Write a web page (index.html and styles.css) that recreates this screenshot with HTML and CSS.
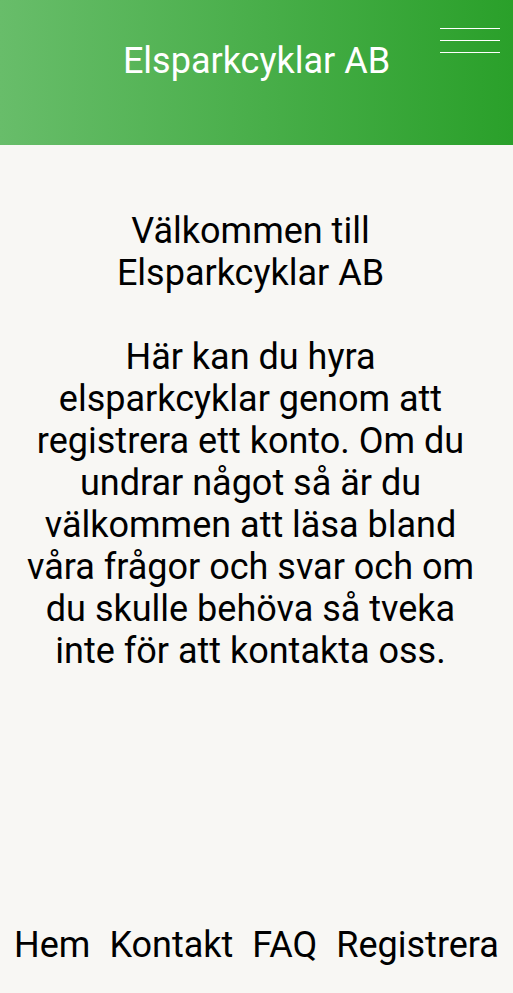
FILE: index.html
```html
<!DOCTYPE html>
<html lang="sv">
<head>
<meta charset="utf-8">
<title>Elsparkcyklar AB</title>
<link rel="stylesheet" href="styles.css">
</head>
<body>
<header class="top">
  <h1 class="brand">Elsparkcyklar AB</h1>
  <button class="menu" aria-label="Meny">
    <span class="bar"></span>
    <span class="bar"></span>
    <span class="bar"></span>
  </button>
</header>
<main class="content">
  <p class="intro">Välkommen till<br>Elsparkcyklar AB</p>
  <p class="intro">Här kan du hyra elsparkcyklar genom att registrera ett konto. Om du undrar något så är du välkommen att läsa bland våra frågor och svar och om du skulle behöva så tveka inte för att kontakta oss.</p>
</main>
<nav class="foot">
  <a href="#">Hem</a>
  <a href="#">Kontakt</a>
  <a href="#">FAQ</a>
  <a href="#">Registrera</a>
</nav>
</body>
</html>
```
FILE: styles.css
```css
* { box-sizing: border-box; }
html, body { margin: 0; padding: 0; }
body {
  font-family: Roboto, "Liberation Sans", sans-serif;
  background: #f8f7f4;
  color: #000;
  min-height: 993px;
  display: flex;
  flex-direction: column;
}
.top {
  position: relative;
  height: 145px;
  background: linear-gradient(90deg, #68bd6a 0%, #2aa02a 100%);
  display: flex;
  justify-content: center;
  padding-top: 40px;
}
.brand {
  margin: 0;
  font-weight: 400;
  font-size: 36px;
  line-height: normal;
  color: #fff;
  align-self: flex-start;
}
.menu {
  position: absolute;
  top: 28px;
  right: 13px;
  width: 60px;
  padding: 0;
  border: 0;
  background: none;
  display: flex;
  flex-direction: column;
  gap: 11px;
}
.bar {
  display: block;
  height: 1px;
  background: #fff;
}
.content {
  flex: 1;
  padding: 65px 30px 0 18px;
  text-align: center;
}
.intro {
  margin: 0 0 42px;
  font-size: 36px;
  line-height: normal;
}
.foot {
  display: flex;
  justify-content: center;
  gap: 19px;
  padding-bottom: 27px;
}
.foot a {
  color: #000;
  text-decoration: none;
  font-size: 36px;
  line-height: normal;
}
```
